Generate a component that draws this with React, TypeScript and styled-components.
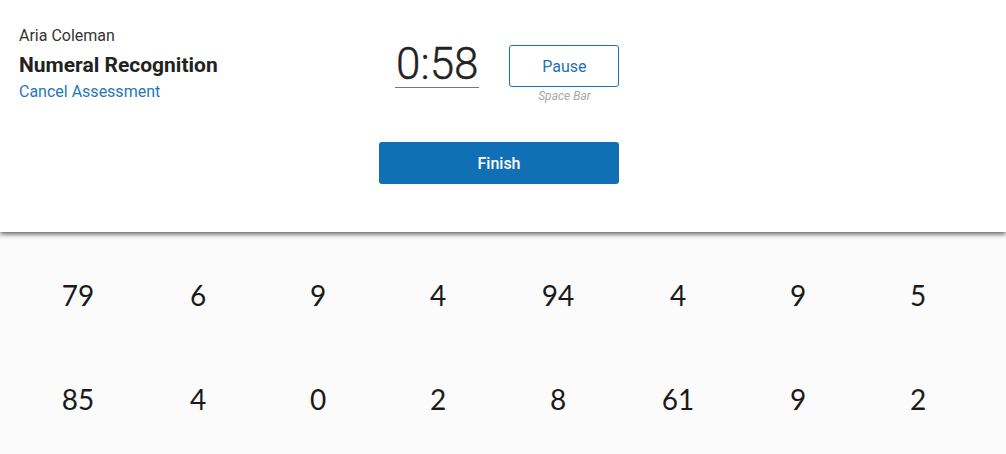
import * as React from 'react';
import styled, { createGlobalStyle } from 'styled-components';

const GlobalStyle = createGlobalStyle`
	html, body {
		margin: 0;
		padding: 0;
		background: #fbfbfb;
		font-family: Roboto, 'Liberation Sans', sans-serif;
	}
`;

const items = [
	[79, 6, 9, 4, 94, 4, 9, 5],
	[85, 4, 0, 2, 8, 61, 9, 2]
];

const App = () => {
	return (
		<>
			<GlobalStyle />
			<Page>
				<Header>
					<TopRow>
						<Student>
							<StudentName>Aria Coleman</StudentName>
							<AssessmentName>Numeral Recognition</AssessmentName>
							<CancelLink href="#">Cancel Assessment</CancelLink>
						</Student>
						<Controls>
							<Timer>0:58</Timer>
							<PauseBlock>
								<PauseButton>Pause</PauseButton>
								<Hint>Space Bar</Hint>
							</PauseBlock>
						</Controls>
					</TopRow>
					<FinishButton>Finish</FinishButton>
				</Header>
				<Board>
					{items.map((row, r) => (
						<NumberRow key={r}>
							{row.map((n, i) => (
								<Cell key={i}>{n}</Cell>
							))}
						</NumberRow>
					))}
				</Board>
			</Page>
		</>
	);
};

export default App;

const Page = styled.div`
	width: 1006px;
	height: 454px;
	overflow: hidden;
	background: #fbfbfb;
`;

const Header = styled.div`
	position: relative;
	z-index: 1;
	height: 232px;
	box-sizing: border-box;
	background: #ffffff;
	box-shadow: 0 2px 5px rgba(0, 0, 0, 0.65);
	padding: 26px 19px 0;
`;

const TopRow = styled.div`
	display: flex;
	align-items: flex-start;
`;

const Student = styled.div`
	width: 376px;
	display: flex;
	flex-direction: column;
`;

const StudentName = styled.div`
	color: #333333;
	font-size: 16px;
	line-height: 19px;
`;

const AssessmentName = styled.div`
	color: #222222;
	font-size: 21px;
	font-weight: 700;
	line-height: 25px;
	margin-top: 8px;
`;

const CancelLink = styled.a`
	color: #1f76bc;
	font-size: 16px;
	line-height: 20px;
	margin-top: 4px;
	text-decoration: none;
`;

const Controls = styled.div`
	display: flex;
	align-items: flex-start;
	margin-top: 14px;
`;

const Timer = styled.div`
	color: #222222;
	font-size: 44px;
	font-weight: 300;
	line-height: 44px;
	padding: 0 1px 1px;
	border-bottom: 1px solid #777777;
	margin-top: 2px;
	-webkit-text-stroke: 0.4px #222222;
`;

const PauseBlock = styled.div`
	display: flex;
	flex-direction: column;
	align-items: center;
	margin-left: 30px;
	margin-top: 5px;
`;

const PauseButton = styled.button`
	width: 110px;
	height: 42px;
	box-sizing: border-box;
	background: #ffffff;
	border: 1px solid #1f70b2;
	border-radius: 3px;
	color: #1f70b2;
	font-family: Roboto, 'Liberation Sans', sans-serif;
	font-size: 16px;
	cursor: pointer;
`;

const Hint = styled.div`
	color: #a8a8a8;
	font-size: 12px;
	font-style: italic;
	line-height: 14px;
	margin-top: 2px;
`;

const FinishButton = styled.button`
	display: block;
	width: 240px;
	height: 42px;
	margin: 39px 0 0 360px;
	background: #1170b5;
	border: none;
	border-radius: 3px;
	color: #ffffff;
	font-family: Roboto, 'Liberation Sans', sans-serif;
	font-size: 16px;
	font-weight: 500;
	cursor: pointer;
`;

const Board = styled.div`
	padding: 46px 0 0 18px;
	display: flex;
	flex-direction: column;
	gap: 70px;
`;

const NumberRow = styled.div`
	display: grid;
	grid-template-columns: repeat(8, 120px);
`;

const Cell = styled.div`
	text-align: center;
	color: #1a1a1a;
	font-family: 'Century Gothic', Lato, 'DejaVu Sans', sans-serif;
	font-size: 28px;
	line-height: 34px;
`;
